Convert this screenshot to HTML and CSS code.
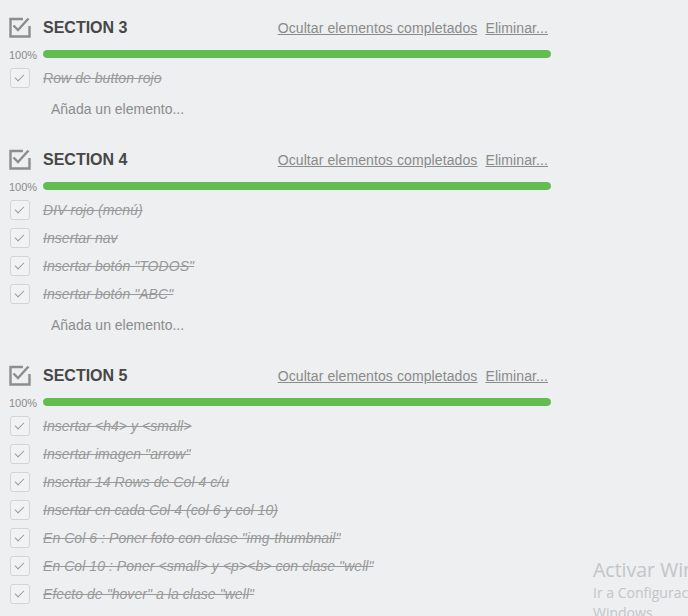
FILE: index.html
```html
<!DOCTYPE html>
<html lang="es">
<head>
<meta charset="utf-8">
<title>Checklists</title>
<link rel="stylesheet" href="styles.css">
</head>
<body>
<main class="checklists">
  <section class="checklist">
    <div class="cl-header">
      <span class="cl-icon"><svg width="22" height="21" viewBox="0 0 22 21"><path d="M14 2H1.5v17.5h19V9" fill="none" stroke="#8d8d8d" stroke-width="2.4"/><path d="M4.5 8.5l4.5 4.5L19.5 1.5" fill="none" stroke="#8d8d8d" stroke-width="2.4"/></svg></span>
      <h3 class="cl-title">SECTION 3</h3>
      <div class="cl-links"><a href="#">Ocultar elementos completados</a><a href="#">Eliminar...</a></div>
    </div>
    <div class="cl-progress"><span class="pct">100%</span><div class="bar"><div class="fill" style="width:100%"></div></div></div>
    <ul class="items">
      <li class="item"><span class="box"></span><span class="txt">Row de button rojo</span></li>
    </ul>
    <div class="add">Añada un elemento...</div>
  </section>

  <section class="checklist">
    <div class="cl-header">
      <span class="cl-icon"><svg width="22" height="21" viewBox="0 0 22 21"><path d="M14 2H1.5v17.5h19V9" fill="none" stroke="#8d8d8d" stroke-width="2.4"/><path d="M4.5 8.5l4.5 4.5L19.5 1.5" fill="none" stroke="#8d8d8d" stroke-width="2.4"/></svg></span>
      <h3 class="cl-title">SECTION 4</h3>
      <div class="cl-links"><a href="#">Ocultar elementos completados</a><a href="#">Eliminar...</a></div>
    </div>
    <div class="cl-progress"><span class="pct">100%</span><div class="bar"><div class="fill" style="width:100%"></div></div></div>
    <ul class="items">
      <li class="item"><span class="box"></span><span class="txt">DIV rojo (menú)</span></li>
      <li class="item"><span class="box"></span><span class="txt">Insertar nav</span></li>
      <li class="item"><span class="box"></span><span class="txt">Insertar botón "TODOS"</span></li>
      <li class="item"><span class="box"></span><span class="txt">Insertar botón "ABC"</span></li>
    </ul>
    <div class="add">Añada un elemento...</div>
  </section>

  <section class="checklist">
    <div class="cl-header">
      <span class="cl-icon"><svg width="22" height="21" viewBox="0 0 22 21"><path d="M14 2H1.5v17.5h19V9" fill="none" stroke="#8d8d8d" stroke-width="2.4"/><path d="M4.5 8.5l4.5 4.5L19.5 1.5" fill="none" stroke="#8d8d8d" stroke-width="2.4"/></svg></span>
      <h3 class="cl-title">SECTION 5</h3>
      <div class="cl-links"><a href="#">Ocultar elementos completados</a><a href="#">Eliminar...</a></div>
    </div>
    <div class="cl-progress"><span class="pct">100%</span><div class="bar"><div class="fill" style="width:100%"></div></div></div>
    <ul class="items">
      <li class="item"><span class="box"></span><span class="txt">Insertar &lt;h4&gt; y &lt;small&gt;</span></li>
      <li class="item"><span class="box"></span><span class="txt">Insertar imagen "arrow"</span></li>
      <li class="item"><span class="box"></span><span class="txt">Insertar 14 Rows de Col 4 c/u</span></li>
      <li class="item"><span class="box"></span><span class="txt">Insertar en cada Col 4 (col 6 y col 10)</span></li>
      <li class="item"><span class="box"></span><span class="txt">En Col 6 : Poner foto con clase "img-thumbnail"</span></li>
      <li class="item"><span class="box"></span><span class="txt">En Col 10 : Poner &lt;small&gt; y &lt;p&gt;&lt;b&gt; con clase "well"</span></li>
      <li class="item"><span class="box"></span><span class="txt">Efecto de "hover" a la clase "well"</span></li>
    </ul>
  </section>
</main>
<div class="watermark">
  <div class="wm-title">Activar Windows</div>
  <div class="wm-sub">Ir a Configuración para activar Windows.</div>
</div>
</body>
</html>
```
FILE: styles.css
```css
html, body {
  margin: 0;
  padding: 0;
  background: #edeff0;
  overflow: hidden;
  height: 616px;
}
body {
  font-family: "Liberation Sans", Arial, sans-serif;
  position: relative;
}
.checklists {
  width: 542px;
  padding: 12px 0 0 9px;
}
.checklist {
  margin-bottom: 20px;
}
.cl-header {
  display: flex;
  align-items: center;
  height: 30px;
  padding-top: 1px;
  box-sizing: border-box;
}
.cl-icon {
  width: 34px;
  height: 21px;
  display: flex;
  align-items: center;
}
.cl-icon svg { display: block; }
.cl-title {
  margin: 0;
  font-size: 16px;
  font-weight: bold;
  color: #474747;
  flex: 1;
}
.cl-links {
  display: flex;
  gap: 8px;
  padding-right: 3px;
  font-size: 14px;
  letter-spacing: 0.1px;
}
.cl-links a {
  color: #8a8a8a;
  text-decoration: underline;
}
.cl-progress {
  display: flex;
  align-items: center;
  height: 22px;
  padding-top: 2px;
  box-sizing: border-box;
}
.pct {
  width: 34px;
  font-size: 11px;
  color: #8c8c8c;
  padding-top: 1px;
}
.bar {
  flex: 1;
  height: 8px;
  border-radius: 4px;
  background: #d6dadc;
  overflow: hidden;
}
.fill {
  height: 100%;
  background: #61bd4f;
  border-radius: 4px;
}
.items {
  list-style: none;
  margin: 0;
  padding: 0;
}
.item {
  display: flex;
  align-items: center;
  height: 28px;
}
.box {
  width: 18px;
  height: 18px;
  margin-left: 1px;
  margin-right: 13px;
  border: 1px solid #d2d4d6;
  border-radius: 3px;
  background: #f1f2f3;
  position: relative;
  box-sizing: content-box;
}
.box::after {
  content: "";
  position: absolute;
  left: 6px;
  top: 3px;
  width: 4px;
  height: 8px;
  border-right: 1.5px solid #9a9a9a;
  border-bottom: 1.5px solid #9a9a9a;
  transform: rotate(45deg);
}
.txt {
  font-size: 14px;
  font-style: italic;
  color: #999;
  letter-spacing: 0.06px;
  text-decoration: line-through;
}
.add {
  margin-top: 2px;
  height: 30px;
  line-height: 30px;
  padding-left: 42px;
  font-size: 14px;
  color: #8c8c8c;
}
.watermark {
  position: absolute;
  left: 593px;
  top: 556px;
  width: 300px;
  font-family: "Open Sans", "Noto Sans", sans-serif;
  color: #c3c5c7;
  white-space: nowrap;
}
.wm-title {
  font-size: 19.5px;
  line-height: 27px;
}
.wm-sub {
  font-size: 14px;
  line-height: 20px;
  white-space: normal;
  width: 230px;
}
```
